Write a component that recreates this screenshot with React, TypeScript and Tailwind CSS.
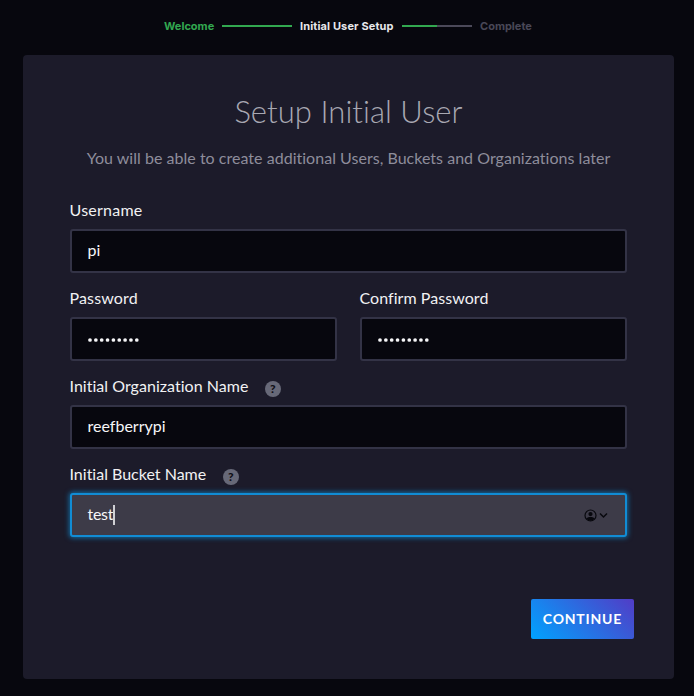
import type { ReactNode } from 'react';

function HelpIcon() {
  return (
    <span className="mt-1.5 ml-[16.5px] flex h-4 w-4 items-center justify-center rounded-full bg-[#676978] text-[12px] leading-4 font-black text-[#0f0e15]">
      ?
    </span>
  );
}

function Label({ children, tracking, help }: { children: string; tracking: string; help?: boolean }) {
  return (
    <div className="flex h-11 items-center pt-[5px] whitespace-nowrap">
      <span className={`-ml-[0.5px] text-[16px] leading-5 text-[#f1f1f3] ${tracking}`}>{children}</span>
      {help && <HelpIcon />}
    </div>
  );
}

function Field({ label, tracking, help, focused, children }: { label: string; tracking: string; help?: boolean; focused?: boolean; children: ReactNode }) {
  return (
    <div className="min-w-0 flex-1">
      <Label tracking={tracking} help={help}>{label}</Label>
      <div
        className={`flex h-11 items-center rounded-[3px] border-2 px-[15.5px] text-[16px] leading-5 text-[#f6f6f8] ${
          focused ? 'border-[#118cd4] bg-[#3d3b48] shadow-[0_0_5px_1px_#118cd4b0]' : 'border-[#333346] bg-[#07070e]'
        }`}
      >
        {children}
      </div>
    </div>
  );
}

function Dots() {
  return (
    <svg width="54" height="6" viewBox="0 0 54 6" fill="#f6f6f8" className="mt-[2px] -ml-[0.5px]">
      {Array.from({ length: 9 }, (_, i) => (
        <circle key={i} cx={3 + i * 5.85} cy={3} r={1.85} />
      ))}
    </svg>
  );
}

function AccountMenu() {
  return (
    <div className="mr-[1.5px] ml-auto flex items-center gap-[2px] text-[#08080e]">
      <svg width="13" height="13" viewBox="0 0 13 13">
        <circle cx="6.5" cy="6.5" r="5.5" fill="none" stroke="currentColor" strokeWidth="1.2" />
        <circle cx="6.5" cy="5.1" r="2.1" fill="currentColor" />
        <path d="M2.4 9.3C3.5 8.3 5 7.9 6.5 7.9s3 .4 4.1 1.4C9.7 10.9 8.3 11.8 6.5 11.8s-3.2-.9-4.1-2.5Z" fill="currentColor" />
      </svg>
      <svg width="9" height="7" viewBox="0 0 9 7" fill="none" stroke="currentColor" strokeWidth="1.5">
        <path d="M1 1.5l3.5 3.5L8 1.5" />
      </svg>
    </div>
  );
}

export default function App() {
  return (
    <div className="flex h-[696px] w-[694px] flex-col overflow-hidden bg-[#07070e] font-['Lato',sans-serif] [font-variant-ligatures:none]">
      <div className="flex h-[55px] shrink-0 items-center pb-[3px] pl-[164px] font-['Inter','Lato',sans-serif] text-[11px] leading-4 font-bold whitespace-nowrap">
        <span className="w-[58px] text-[#32a850]">Welcome</span>
        <span className="h-0.5 w-[70px] bg-[#32a850]" />
        <span className="ml-2 w-[102px] tracking-[0.13px] text-[#e7e8eb]">Initial User Setup</span>
        <span className="h-0.5 w-[35px] bg-[#32a850]" />
        <span className="h-0.5 w-[35px] bg-[#4b4959]" />
        <span className="ml-2 text-[#494757]">Complete</span>
      </div>
      <main className="ml-[23px] flex h-[624px] w-[651px] flex-col rounded-[4px] bg-[#1c1b2a] px-[47px]">
        <h1 className="mt-9 text-center text-[31px] leading-[40px] font-light tracking-[0.05px] whitespace-nowrap text-[#a8a8b2]">Setup Initial User</h1>
        <p className="mt-[17px] text-center text-[16px] leading-5 tracking-[0.025px] whitespace-nowrap text-[#8e8d9b]">
          You will be able to create additional Users, Buckets and Organizations later
        </p>
        <div className="mt-[17px] flex flex-col">
          <Field label="Username" tracking="tracking-[0.25px]"><span className="-mt-0.5">pi</span></Field>
          <div className="flex gap-[23px]">
            <Field label="Password" tracking="tracking-[0.15px]"><Dots /></Field>
            <Field label="Confirm Password" tracking="tracking-[0.05px]"><Dots /></Field>
          </div>
          <Field label="Initial Organization Name" tracking="tracking-[0.03px]" help><span className="-mt-0.5">reefberrypi</span></Field>
          <Field label="Initial Bucket Name" tracking="tracking-[0px]" help focused>
            <span className="-mt-0.5 tracking-[-0.3px]">test</span>
            <span className="h-5 w-0.5 bg-[#d0d0d4]" />
            <AccountMenu />
          </Field>
        </div>
        <button className="mt-[62px] mr-[-7px] h-10 w-[103px] self-end rounded-[2px] bg-[linear-gradient(45deg,#00a3ff,#513cc6)] text-center text-[14px] leading-10 font-bold tracking-[0.8px] text-white">
          CONTINUE
        </button>
      </main>
    </div>
  );
}
